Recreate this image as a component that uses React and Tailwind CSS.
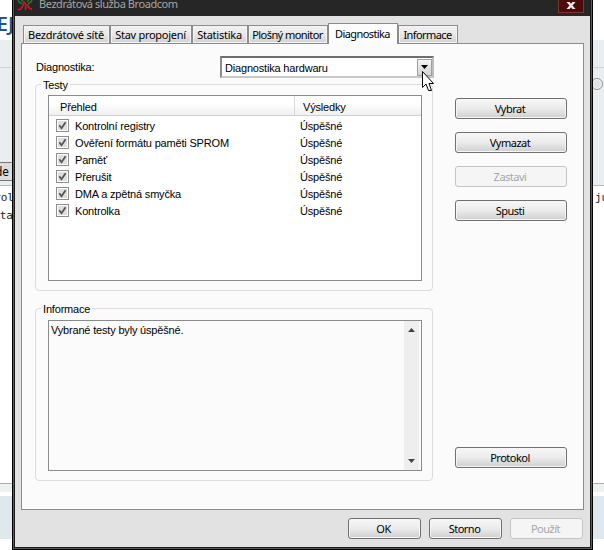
const TABS = [
  { label: "Bezdrátové sítě", box: "w-[87px]", text: "tracking-[-0.2px]" },
  { label: "Stav propojení", box: "w-[82px]", text: "tracking-[-0.28px]" },
  { label: "Statistika", box: "w-[56px]", text: "tracking-[-0.25px]" },
  { label: "Plošný monitor", box: "w-[80px]", text: "tracking-[-0.56px]" },
  { label: "Diagnostika", box: "w-[70px]", text: "tracking-[-0.6px]", active: true },
  { label: "Informace", box: "w-[60px]", text: "tracking-[-0.6px]" },
];

const TESTS = [
  "Kontrolní registry",
  "Ověření formátu paměti SPROM",
  "Paměť",
  "Přerušit",
  "DMA a zpětná smyčka",
  "Kontrolka",
];

function Button({ children, disabled, className = "w-[112px]" }) {
  const look = disabled
    ? "border-[#c4c4c4] bg-[#f5f5f5] text-[#a6a6a6]"
    : "border-[#707070] bg-linear-to-b from-[#f7f7f7] via-[#ebebeb] to-[#cfcfcf] text-black shadow-[inset_0_0_0_1px_#f6f6f6]";
  return (
    <button className={`flex h-[21px] shrink-0 items-center justify-center rounded-[3px] border pr-[2px] leading-[15px] tracking-[-0.5px] ${look} ${className}`}>
      {children}
    </button>
  );
}

function Group({ title, className, children }) {
  return (
    <section className={`w-[398px] rounded-[4px] border border-[#dcdcdc] px-[12px] ${className}`}>
      <div className="-mt-[6px] -ml-[7px] flex h-[12px] items-end">
        <span className="bg-[#fbfbfb] px-[2px] leading-[11px]">{title}</span>
      </div>
      {children}
    </section>
  );
}

function Check() {
  return (
    <span className="flex size-[13px] items-center justify-center border border-[#8e8e8e] bg-white p-px">
      <svg width="9" height="9" viewBox="0 0 9 9" className="bg-[#dedede]">
        <path d="M1.3 4.3 3.5 7.3 7.6 1.2" fill="none" stroke="#555" strokeWidth="1.8" />
      </svg>
    </span>
  );
}

function LeftPage() {
  return (
    <div className="flex w-[12px] shrink-0 flex-col overflow-hidden bg-white text-[#222]">
      <div className="flex h-[40px] items-end justify-end pb-[6px]">
        <span className="-mr-[2px] font-['Open_Sans',sans-serif] text-[20px] leading-[21px] font-semibold text-[#245580]">EJ</span>
      </div>
      <div className="h-[28px] border-b border-[#d0d4d6] bg-[#e9eef0]" />
      <div className="h-[94px] bg-[#e9eef0]" />
      <div className="flex h-[19px] items-center justify-end border-y border-[#777] bg-[#dcdcdc] pr-[3px] font-['DejaVu_Sans_Condensed',sans-serif] text-[12px] text-black">de</div>
      <div className="h-[5px] border-b border-[#b5babc] bg-[#e9eef0]" />
      <div className="flex h-[297px] flex-col items-end pt-[3px] font-['DejaVu_Sans_Mono',monospace] text-[11px] leading-[18px]">
        <span className="-mr-[2px]">rol</span>
        <span className="-mr-[1px]">sta</span>
      </div>
      <div className="h-[9px] border-t border-[#a9aeb0] bg-[#edf1f2]" />
      <div className="mt-[4px] h-[43px] bg-[#dfe9ed]" />
    </div>
  );
}

function RightPage() {
  return (
    <div className="flex w-[11px] shrink-0 flex-col overflow-hidden bg-white text-[#222]">
      <div className="mt-[40px] h-[28px] border-b border-[#d0d4d6] bg-[#e9eef2]" />
      <div className="h-[118px] border-b border-[#b5babc] bg-[#e9eef2] pt-[10px]">
        <div className="-ml-[2px] size-[12px] rounded-full border border-[#8d9193] bg-[#e3e3e3] shadow-[inset_0_0_0_1px_#fff]" />
      </div>
      <div className="h-[297px] pt-[3px] pl-[2px] font-['DejaVu_Sans_Mono',monospace] text-[11px] leading-[18px]">ju</div>
      <div className="h-[9px] border-t border-[#a9aeb0] bg-[#edf1f2]" />
      <div className="mt-[4px] h-[43px] bg-[#dfe8ee]" />
    </div>
  );
}

export default function App() {
  return (
    <div className="relative flex h-[550px] w-[604px] overflow-hidden bg-white font-['Liberation_Sans',Arial,sans-serif] text-[11px] text-black">
      <LeftPage />
      <div className="flex w-[581px] shrink-0 flex-col border-x border-b border-black bg-[#5a5a5a] px-px pb-px">
        <div className="flex flex-1 flex-col border-x border-b border-[#1c1c1c]">
          <header className="flex h-[16px] shrink-0 items-start overflow-hidden bg-[#262626] pr-[6px]">
            <svg width="18" height="11" viewBox="0 0 18 11" className="ml-px shrink-0">
              <path d="M2 0Q3 3 6 3.5M5 0 7 1.5M16 0Q15 3 12 3.5M13 0 11 1.5" fill="none" stroke="#287a32" strokeWidth="1.4" />
              <path d="M1.5 9.5H4.5L6.5 6.5 8 2 9.8 4.5 9.5 10M11.5 4 12.5 7.5 16 9.5" fill="none" stroke="#d01624" strokeWidth="1.6" />
            </svg>
            <span className="-mt-[4px] ml-[5px] font-['Noto_Sans',sans-serif] leading-[16px] tracking-[-0.43px] whitespace-nowrap text-[#a5a5a5]">Bezdrátová služba Broadcom</span>
            <div className="ml-auto flex h-[13px] w-[26px] items-start justify-center border border-t-0 border-[#7c3632] bg-[#4b0d09] pt-[2px]">
              <svg width="10" height="7" viewBox="0 0 10 7">
                <path d="M.5 0H3.5L5 1.7 6.5 0H9.5L6.5 3.5 9.5 7H6.5L5 5.3 3.5 7H.5L3.5 3.5Z" fill="#f4eeee" />
              </svg>
            </div>
          </header>
          <main className="flex flex-1 flex-col bg-[#e2e2e2] pt-[7px] pr-[6px] pl-[6px]">
            <nav className="z-10 ml-[2px] flex h-[21px] items-end font-['Noto_Sans',sans-serif] leading-[15px]">
              {TABS.map((t) => (
                <div
                  key={t.label}
                  className={`flex shrink-0 items-center justify-center border border-b-0 border-[#8b8b8b] pr-px whitespace-nowrap ${t.box} ${
                    t.active
                      ? "h-[21px] bg-[#fcfcfc] pb-[2px]"
                      : "mb-px h-[18px] bg-linear-to-b from-[#f2f2f2] via-[#e8e8e8] to-[#d0d0d0] shadow-[inset_0_0_0_1px_#f4f4f4]"
                  }`}
                >
                  <span className={t.text}>{t.label}</span>
                </div>
              ))}
            </nav>
            <div className="-mt-px flex h-[467px] shrink-0 border border-[#8b8b8b] bg-[#fbfbfb] pl-[13px] tracking-[-0.18px]">
              <div className="w-[398px] shrink-0">
                <div className="flex h-[34px] items-end">
                  <span className="mb-[3px] w-[185px] pl-[1px]">Diagnostika:</span>
                  <div className="-mr-[2px] flex h-[22px] w-[214px] shrink-0 items-center justify-between border-2 border-t-[#6e6e6e] border-r-[#bcbcbc] border-b-[#c8c8c8] border-l-[#8c8c8c] bg-white pl-[3px]">
                    <span className="pt-[2px] leading-[14px]">Diagnostika hardwaru</span>
                    <span className="flex h-[17px] w-[15px] items-center justify-center border border-[#a0a0a0] bg-linear-to-b from-[#f5f5f5] to-[#d2d2d2]">
                      <svg width="7" height="4" viewBox="0 0 7 4"><path d="M0 0H7L3.5 4Z" /></svg>
                    </span>
                  </div>
                </div>
                <Group title="Testy" className="mt-[6px] h-[207px]">
                  <div className="mt-[4px] flex h-[186px] w-[374px] flex-col border border-[#8b8b8b] bg-white">
                    <div className="flex h-[20px] shrink-0 border-b border-[#d0d0d0] bg-linear-to-b from-white from-40% to-[#f0f0f0] leading-[14px]">
                      <span className="flex w-[246px] items-center border-r border-[#d8d8d8] pt-[2px] pl-[11px]">Přehled</span>
                      <span className="flex items-center pt-[2px] pl-[8px]">Výsledky</span>
                    </div>
                    <div className="pt-[1px] leading-[13px]">
                      {TESTS.map((name) => (
                        <div key={name} className="flex h-[17px] items-center pl-[7px]">
                          <Check />
                          <span className="w-[225px] pt-[2px] pl-[6px]">{name}</span>
                          <span className="pt-[2px] pl-[6px]">Úspěšné</span>
                        </div>
                      ))}
                    </div>
                  </div>
                </Group>
                <Group title="Informace" className="mt-[17px] h-[173px]">
                  <div className="mt-[5px] flex h-[151px] w-[374px] justify-between border border-[#8b8b8b] pr-[2px]">
                    <p className="pt-[2px] pl-[2px] leading-[15px]">Vybrané testy byly úspěšné.</p>
                    <div className="flex w-[15px] flex-col items-center justify-between bg-[#eeeeee] py-[7px]">
                      <svg width="7" height="4" viewBox="0 0 7 4"><path d="M0 4H7L3.5 0Z" fill="#444" /></svg>
                      <svg width="7" height="4" viewBox="0 0 7 4"><path d="M0 0H7L3.5 4Z" fill="#444" /></svg>
                    </div>
                  </div>
                </Group>
              </div>
              <div className="ml-[22px] flex flex-col gap-[13px] pt-[54px] font-['Noto_Sans',sans-serif]">
                <Button>Vybrat</Button>
                <Button>Vymazat</Button>
                <Button disabled>Zastavi</Button>
                <Button>Spusti</Button>
                <Button className="mt-[213px] w-[112px]">Protokol</Button>
              </div>
            </div>
            <footer className="mt-[8px] flex justify-end gap-[8px] pr-px font-['Noto_Sans',sans-serif]">
              <Button className="w-[73px]">OK</Button>
              <Button className="w-[73px]">Storno</Button>
              <Button disabled className="w-[73px]">Použít</Button>
            </footer>
          </main>
        </div>
      </div>
      <RightPage />
      <svg className="absolute top-[71px] left-[422px]" width="12" height="21" viewBox="0 0 12 21">
        <path d="M.5 .5V16.5L4 13L6.5 19.5H9.5L7 12.5H11.5Z" fill="#fff" stroke="#000" />
      </svg>
    </div>
  );
}
